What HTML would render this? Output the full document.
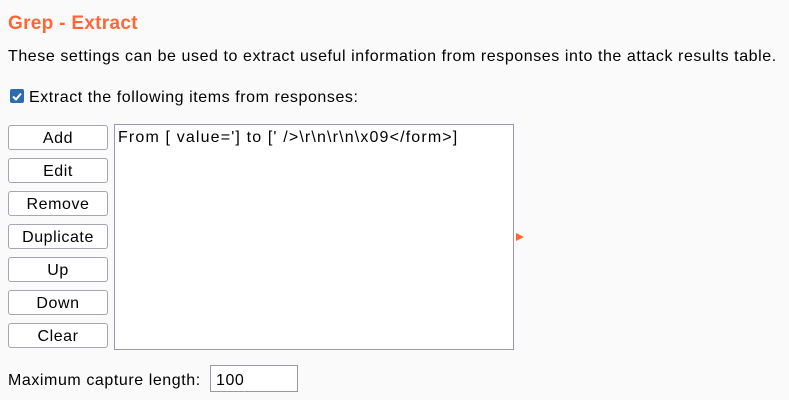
<!DOCTYPE html>
<html><head><style>
body{margin:0;width:789px;height:400px;background:#fafafa;font-family:"Liberation Sans",sans-serif;font-size:16px;letter-spacing:0.57px;color:#000;position:relative;overflow:hidden}
.a{position:absolute;white-space:nowrap}
.btn{position:absolute;left:8px;width:98px;height:23px;border:1px solid #a6a6b0;border-radius:3px;background:#fff;text-align:center;line-height:25px}
</style></head><body>
<div class="a" style="left:8px;top:13px;font-size:19px;font-weight:bold;color:#ff6633;letter-spacing:0.3px">Grep - Extract</div>
<div class="a" style="left:8px;top:48px">These settings can be used to extract useful information from responses into the attack results table.</div>
<div class="a" style="left:10px;top:89px;width:14px;height:14px;background:#2d6bb0;border-radius:2px"><svg width="14" height="14"><path d="M3 7.5l3 3 5-6" stroke="#fff" stroke-width="2" fill="none"/></svg></div>
<div class="a" style="left:29px;top:89px">Extract the following items from responses:</div>
<div class="btn" style="top:125px">Add</div>
<div class="btn" style="top:158px">Edit</div>
<div class="btn" style="top:191px">Remove</div>
<div class="btn" style="top:224px">Duplicate</div>
<div class="btn" style="top:257px">Up</div>
<div class="btn" style="top:290px">Down</div>
<div class="btn" style="top:323px">Clear</div>
<div class="a" style="left:114px;top:124px;width:398px;height:224px;border:1px solid #9a98a8;background:#fff"></div>
<div class="a" style="left:118px;top:129px;letter-spacing:1.15px">From [ value='] to [' /&gt;\r\n\r\n\x09&lt;/form&gt;]</div>
<div class="a" style="left:516px;top:233px;width:0;height:0;border-left:8px solid #ff6633;border-top:4px solid transparent;border-bottom:4px solid transparent"></div>
<div class="a" style="left:8px;top:372px">Maximum capture length:</div>
<div class="a" style="left:210px;top:365px;width:86px;height:25px;border:1px solid #9a98a8;background:#fff"></div>
<div class="a" style="left:216px;top:372px">100</div>
</body></html>
